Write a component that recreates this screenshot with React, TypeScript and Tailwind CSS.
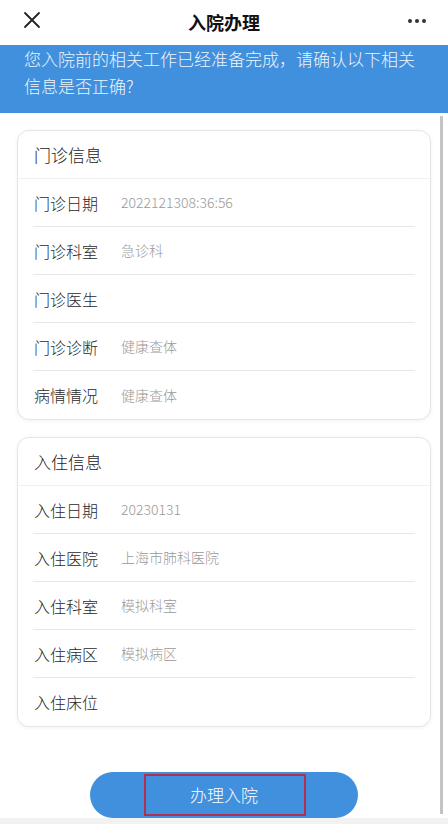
import React from "react";

const outpatient: [string, string][] = [
  ["门诊日期", "2022121308:36:56"],
  ["门诊科室", "急诊科"],
  ["门诊医生", ""],
  ["门诊诊断", "健康查体"],
  ["病情情况", "健康查体"],
];

const stay: [string, string][] = [
  ["入住日期", "20230131"],
  ["入住医院", "上海市肺科医院"],
  ["入住科室", "模拟科室"],
  ["入住病区", "模拟病区"],
  ["入住床位", ""],
];

function Card({ title, rows }: { title: string; rows: [string, string][] }) {
  return (
    <div className="rounded-[12px] border border-[#e6e6e6] bg-white shadow-[0_1px_4px_rgba(0,0,0,0.06)]">
      <div className="flex h-[48px] items-center border-b border-[#f0f0f0] px-[16px] text-[17px] font-light text-[#222]">
        {title}
      </div>
      <div className="px-[15px]">
        {rows.map(([k, v], i) => (
          <div
            key={k}
            className={`flex h-[48px] items-center ${i < rows.length - 1 ? "border-b border-[#e8e8e8]" : ""}`}
          >
            <span className="w-[88px] pl-[1px] text-[16px] font-light text-[#2a2a2a]">{k}</span>
            <span className="text-[14px] font-light text-[#999]">{v}</span>
          </div>
        ))}
      </div>
    </div>
  );
}

export default function App() {
  return (
    <div
      className="relative flex h-[824px] w-[448px] flex-col overflow-hidden bg-white"
      style={{ fontFamily: '"Noto Sans CJK SC", "Noto Sans", sans-serif' }}
    >
      {/* header */}
      <div className="relative flex h-[45px] shrink-0 items-center justify-center bg-white">
        <svg
          className="absolute left-[23px] top-[11px]"
          width="18"
          height="18"
          viewBox="0 0 18 18"
          fill="none"
          stroke="#222"
          strokeWidth="1.8"
          strokeLinecap="round"
        >
          <path d="M2 2 L16 16 M16 2 L2 16" />
        </svg>
        <span className="text-[18px] font-bold text-[#111]">入院办理</span>
        <div className="absolute right-[22px] top-[19px] flex gap-[3px]">
          <span className="h-[4px] w-[4px] rounded-full bg-[#333]" />
          <span className="h-[4px] w-[4px] rounded-full bg-[#333]" />
          <span className="h-[4px] w-[4px] rounded-full bg-[#333]" />
        </div>
      </div>

      {/* blue band */}
      <div className="h-[68px] shrink-0 bg-[#4090dd] pl-[24px] pr-[20px] text-[17px] font-light leading-[27px] text-[#eef4fc]">
        您入院前的相关工作已经准备完成，请确认以下相关信息是否正确?
      </div>

      {/* content */}
      <div className="relative flex flex-1 flex-col">
        <div className="flex flex-col gap-[17px] px-[17px] pt-[17px] pr-[17px]">
          <Card title="门诊信息" rows={outpatient} />
          <Card title="入住信息" rows={stay} />
        </div>
        <div className="mt-auto flex justify-center">
          <div className="relative flex h-[46px] w-[268px] items-center justify-center rounded-full bg-[#4090dd] text-[17px] font-light text-white">
            办理入院
            <div className="absolute left-[54px] top-[2px] h-[42px] w-[162px] border-2 border-[#b03050]" />
          </div>
        </div>
        {/* scrollbar */}
        <div className="absolute right-[5px] top-[3px] h-[698px] w-[3px] bg-[#c4c4c4]" />
      </div>

      <div className="h-[6px] shrink-0 bg-[#f2f2f2]" />
    </div>
  );
}
